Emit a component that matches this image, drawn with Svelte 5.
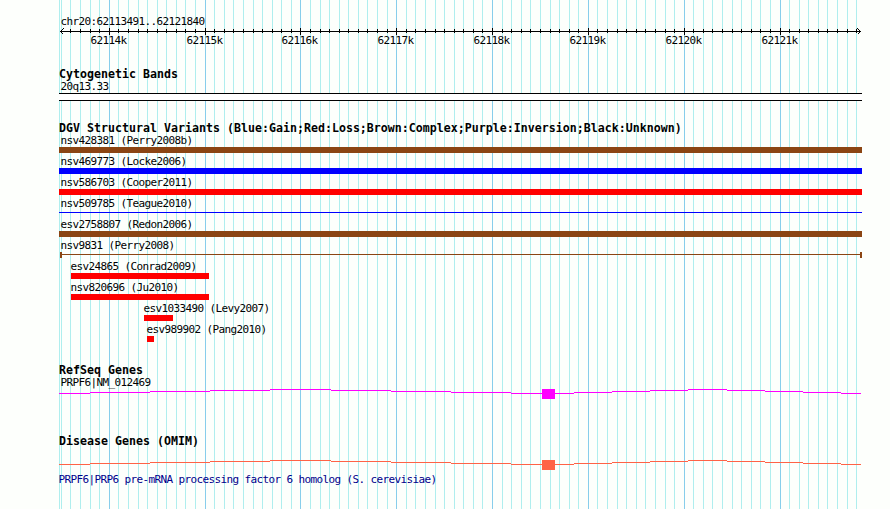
<script>
	const start = 62113491;
	const end = 62121840;
	const scale = 800 / (end - start);
	const toX = (pos) => Math.round((pos - start) * scale) + 1;

	const ticks = [];
	for (let pos = 62113500; pos <= 62121800; pos += 100) {
		ticks.push({ pos, x: toX(pos), major: pos % 1000 === 0 });
	}
	const majors = ticks.filter((t) => t.major);

	const variants = [
		{ name: 'nsv428381 (Perry2008b)', type: 'complex', left: 0, width: 803 },
		{ name: 'nsv469773 (Locke2006)', type: 'gain', left: 0, width: 803 },
		{ name: 'nsv586703 (Cooper2011)', type: 'loss', left: 0, width: 803 },
		{ name: 'nsv509785 (Teague2010)', type: 'gain thin', left: 0, width: 803 },
		{ name: 'esv2758807 (Redon2006)', type: 'complex', left: 0, width: 803 },
		{ name: 'nsv9831 (Perry2008)', type: 'range', left: 1, width: 802 },
		{ name: 'esv24865 (Conrad2009)', type: 'loss', left: 12, width: 138 },
		{ name: 'nsv820696 (Ju2010)', type: 'loss', left: 12, width: 138 },
		{ name: 'esv1033490 (Levy2007)', type: 'loss', left: 85, width: 29 },
		{ name: 'esv989902 (Pang2010)', type: 'loss', left: 88, width: 7 }
	];

	// intron segments: [from, to, height above the baseline]
	const introns = [
		[0, 31, 0], [31, 91, 1], [91, 151, 2], [151, 211, 3], [211, 272, 4],
		[272, 332, 3], [332, 392, 2], [392, 452, 1], [452, 515, 0],
		[515, 553, 1], [553, 591, 2], [591, 629, 3], [629, 668, 4],
		[668, 706, 3], [706, 744, 2], [744, 782, 1], [782, 802, 0]
	];
</script>

{#snippet gene(kind)}
	<svg class="gene {kind}" width="803" height="10">
		{#each introns as [from, to, up]}
			<rect x={from} y={4 - up} width={to - from} height="1" />
		{/each}
		<rect x="483" y="0" width="13" height="10" />
	</svg>
{/snippet}

<div class="browser">
	<svg class="grid" width="803" height="509">
		<rect class="minor" x="0" y="0" width="1" height="509" />
		{#each ticks as t}
			<rect class={t.major ? 'major' : 'minor'} x={t.x} y="0" width="1" height="509" />
		{/each}
	</svg>

	<div class="panel">
		<div class="ruler">
			<div class="label">chr20:62113491..62121840</div>
			<svg class="axis" width="803" height="8">
				<rect x="1" y="4" width="801" height="1" />
				{#each ticks.slice(1) as t}
					<rect x={t.x} y={t.major ? 1 : 2} width="1" height={t.major ? 7 : 4} />
				{/each}
				<path d="M1.5 4.5L4.5 1.5M1.5 4.5L4.5 7.5M801.5 4.5L798.5 1.5M801.5 4.5L798.5 7.5" />
			</svg>
			<svg class="numbers" width="803" height="12">
				{#each majors as t}
					<text x={t.x - 18.5} y="9">{t.pos / 1000}k</text>
				{/each}
			</svg>
		</div>

		<section class="cyto">
			<h2>Cytogenetic Bands</h2>
			<div class="label">20q13.33</div>
			<div class="band"></div>
		</section>

		<section class="dgv">
			<h2>DGV Structural Variants (Blue:Gain;Red:Loss;Brown:Complex;Purple:Inversion;Black:Unknown)</h2>
			{#each variants as v}
				<div class="variant" style="margin-left: {v.left}px">
					<div class="label" class:inset={v.left > 1} class:ranged={v.left === 1}>{v.name}</div>
					<div class="bar {v.type}" style="width: {v.width}px"></div>
				</div>
			{/each}
		</section>

		<section class="refseq">
			<h2>RefSeq Genes</h2>
			<div class="label">PRPF6|NM_012469</div>
			{@render gene('magenta')}
		</section>

		<section class="omim">
			<h2>Disease Genes (OMIM)</h2>
			{@render gene('tomato')}
			<div class="description">PRPF6|PRP6 pre-mRNA processing factor 6 homolog (S. cerevisiae)</div>
		</section>
	</div>
</div>

<style>
	:global(body) {
		margin: 0;
		background: #fdfffc;
	}

	.browser {
		position: relative;
		width: 890px;
		height: 509px;
		overflow: hidden;
		color: #000;
		font: 11px/12px "DejaVu Sans Mono", monospace;
		letter-spacing: -0.622px;
	}

	svg {
		display: block;
		shape-rendering: crispEdges;
	}

	.grid {
		position: absolute;
		top: 0;
		left: 59px;
	}

	.minor {
		fill: #afeeee;
	}

	.major {
		fill: #87ceeb;
	}

	.panel {
		position: relative;
		margin-left: 59px;
		width: 803px;
	}

	.ruler {
		padding-top: 16px;
	}

	.ruler .label {
		height: 11px;
	}

	.axis path {
		fill: none;
		stroke: #000;
	}

	.numbers text {
		fill: #000;
	}

	h2 {
		margin: 0;
		height: 13px;
		font-size: 11.6px;
		line-height: 12px;
		font-weight: bold;
		letter-spacing: 0.017px;
		white-space: nowrap;
	}

	.label {
		height: 12px;
		padding-left: 1.5px;
		white-space: nowrap;
	}

	.label.inset {
		padding-left: 0;
		margin-left: -0.5px;
	}

	.label.ranged {
		padding-left: 0.5px;
	}

	.cyto {
		padding-top: 21px;
	}

	.band {
		box-sizing: border-box;
		height: 8px;
		border-top: 1px solid #000;
		border-bottom: 1px solid #000;
		background: #fff;
	}

	.dgv {
		padding-top: 21px;
	}

	.variant {
		height: 21px;
	}

	.bar {
		height: 6px;
	}

	.complex {
		background: #8b4513;
	}

	.gain {
		background: #00f;
	}

	.loss {
		background: #f00;
	}

	.thin {
		height: 1px;
		position: relative;
		top: 2px;
	}

	.range {
		box-sizing: border-box;
		border: solid #8b4513;
		border-width: 0 2px;
		background: linear-gradient(#8b4513, #8b4513) 0 2px / 100% 1px no-repeat;
	}

	.refseq {
		padding-top: 19px;
	}

	.omim {
		padding-top: 36px;
	}

	.omim .gene {
		margin-top: 12px;
	}

	.magenta {
		fill: #f0f;
	}

	.tomato {
		fill: #ff6347;
	}

	.description {
		margin: 4px 0 0 -0.5px;
		color: #00008b;
	}
</style>
